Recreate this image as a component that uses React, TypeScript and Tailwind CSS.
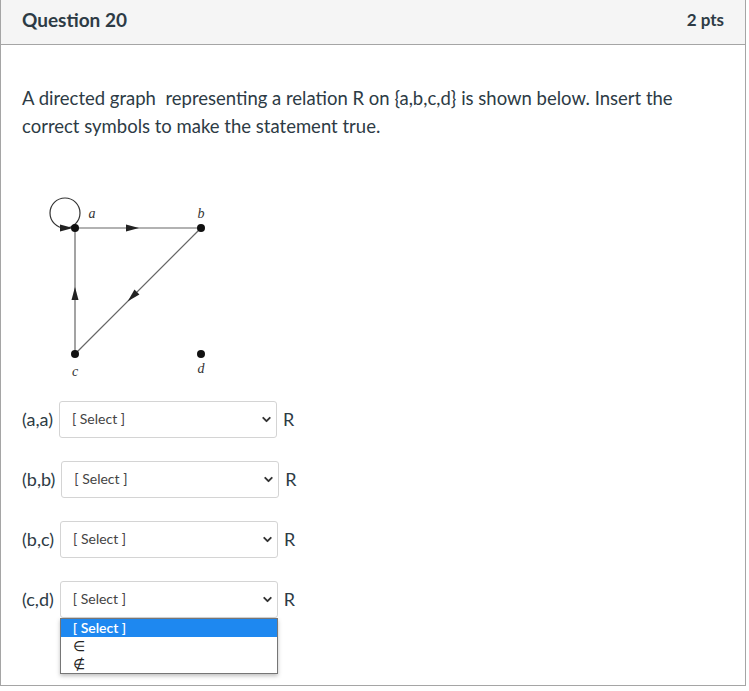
import { ChevronDown } from "lucide-react";

type Row = { label: string; open?: boolean };

const rows: Row[] = [
  { label: "(a,a)" },
  { label: "(b,b)" },
  { label: "(b,c)" },
  { label: "(c,d)", open: true },
];

const head = "M-7 -3.5 L6 0 L-7 3.5 Z";

function Graph() {
  return (
    <svg width="200" height="192" viewBox="0 0 200 192" className="ml-[18px] block">
      <g stroke="#666" strokeWidth="1.2" fill="none">
        <line x1="35" y1="38" x2="161" y2="38" />
        <line x1="35" y1="164" x2="35" y2="38" />
        <line x1="161" y1="38" x2="35" y2="164" />
        <circle cx="25" cy="23" r="15" stroke="#333" />
      </g>
      {/* arrow heads */}
      <path d={head} fill="#222" transform="translate(93 38)" />
      <path d={head} fill="#222" transform="translate(35 103) rotate(-90)" />
      <path d={head} fill="#222" transform="translate(92 107) rotate(135)" />
      <path d={head} fill="#222" transform="translate(27 38)" />
      <circle cx="35" cy="38" r="4" fill="#111" />
      <circle cx="161" cy="38" r="4" fill="#111" />
      <circle cx="35" cy="164" r="4" fill="#111" />
      <circle cx="161" cy="164" r="4" fill="#111" />
      <g fontFamily="'Liberation Serif', serif" fontStyle="italic" fontSize="14" fill="#333" textAnchor="middle">
        <text x="52" y="28">a</text>
        <text x="161" y="28">b</text>
        <text x="35" y="186">c</text>
        <text x="161" y="183">d</text>
      </g>
    </svg>
  );
}

function SelectRow({ label, open }: Row) {
  return (
    <div className="flex items-center gap-[6px]">
      <span className="text-[18px]">{label}</span>
      <div className="relative">
        <div className="flex h-[37px] w-[218px] items-center justify-between rounded-[3px] border border-[#d4d4d4] bg-white pb-[2px] pl-[12px] pr-[3px] text-[14px] text-[#444]">
          <span>[ Select ]</span>
          <ChevronDown size={13} strokeWidth={3.5} className="mt-[2px] text-[#333]" />
        </div>
        {open && (
          <div className="absolute left-0 top-[37px] w-[218px] border border-[#767676] bg-white text-[14px] leading-[18px] text-[#222] shadow-[0_2px_4px_rgba(0,0,0,0.25)]">
            <div className="bg-[#1e88f0] pl-[12px] font-semibold text-white">[ Select ]</div>
            <div className="pl-[12px]">∈</div>
            <div className="pl-[12px]">∉</div>
          </div>
        )}
      </div>
      <span className="text-[18px]">R</span>
    </div>
  );
}

export default function App() {
  return (
    <div className="h-[691px] w-[749px] bg-white font-['Lato','Open_Sans',sans-serif] text-[#2d3b45]">
      <div className="h-[686px] w-[746px] border-x border-b border-[#a5a5a5]">
        <div className="flex h-[45px] items-center justify-between border-b border-[#a5a5a5] bg-[#f5f5f5] px-[21px] pb-[4px]">
          <h2 className="text-[19px] font-bold">Question 20</h2>
          <span className="text-[17px] font-bold">2 pts</span>
        </div>
        <div className="px-[21px] pt-[39px]">
          <p className="text-[18.5px] leading-[28px]">
            A directed graph&nbsp; representing a relation R on {"{a,b,c,d}"} is shown below. Insert the correct symbols to make the statement true.
          </p>
          <div className="mt-[50px]">
            <Graph />
          </div>
          <div className="mt-[19px] flex flex-col gap-[23px]">
            {rows.map((r) => (
              <SelectRow key={r.label} {...r} />
            ))}
          </div>
        </div>
      </div>
    </div>
  );
}
